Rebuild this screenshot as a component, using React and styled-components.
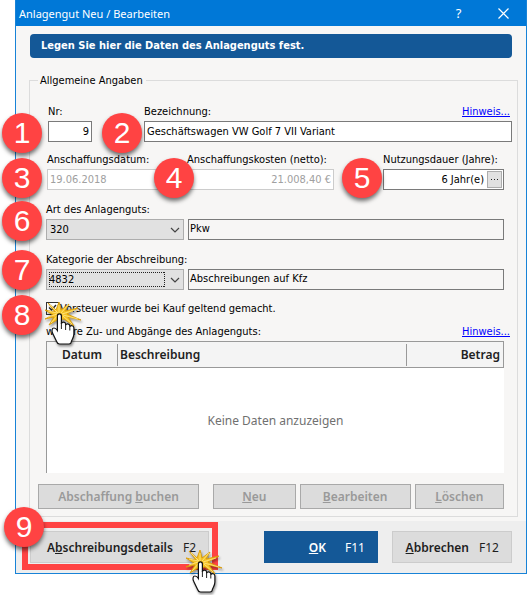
import React, { useState } from 'react';
import styled, { createGlobalStyle } from 'styled-components';

const App = () => {
  const [tax, setTax] = useState(true);

  return (
    <Page>
      <GlobalStyle />
      <Dialog>
        <TitleBar>
          <Title>Anlagengut Neu / Bearbeiten</Title>
          <TitleBtn type="button" aria-label="Hilfe">?</TitleBtn>
          <TitleBtn type="button" aria-label="Schließen">
            <svg width="11" height="11" viewBox="0 0 11 11">
              <path d="M.5.5l10 10M10.5.5l-10 10" stroke="#fff" strokeWidth="1.2" />
            </svg>
          </TitleBtn>
        </TitleBar>

        <Main>
          <Banner>Legen Sie hier die Daten des Anlagenguts fest.</Banner>
          <Group>
            <Legend>Allgemeine Angaben</Legend>
            <Fields>
              <Row $wide $left="2px">
                <Field $width="44px">
                  <Label htmlFor="nr">Nr:</Label>
                  <Input id="nr" defaultValue="9" $right />
                  <FieldBadge $left="-46px" $bottom="-11px">1</FieldBadge>
                </Field>
                <Field $gap="52px" $grow>
                  <LabelLine>
                    <Label htmlFor="name">Bezeichnung:</Label>
                    <Hint href="#name">Hinweis...</Hint>
                  </LabelLine>
                  <Input id="name" defaultValue="Geschäftswagen VW Golf 7 VII Variant" />
                  <FieldBadge $left="-42px" $bottom="-11px">2</FieldBadge>
                </Field>
              </Row>

              <Row $top="9px" $left="1px">
                <Field $width="118px">
                  <Label htmlFor="date">Anschaffungsdatum:</Label>
                  <Input id="date" defaultValue="19.06.2018" disabled />
                  <FieldBadge $left="-45px" $bottom="-8px">3</FieldBadge>
                </Field>
                <Field $gap="22px" $grow>
                  <Label htmlFor="cost">Anschaffungskosten (netto):</Label>
                  <Input id="cost" defaultValue="21.008,40 €" disabled $right />
                  <FieldBadge $left="-33px" $bottom="-8px">4</FieldBadge>
                </Field>
                <Field $gap="49px" $width="121px">
                  <Label htmlFor="years">Nutzungsdauer (Jahre):</Label>
                  <InputBox>
                    <InnerInput id="years" defaultValue="6 Jahr(e)" />
                    <MoreBtn type="button" aria-label="Auswählen">
                      <svg width="8" height="1" viewBox="0 0 8 1" fill="#222">
                        <path d="M0 0h1v1H0zM3 0h1v1H3zM6 0h1v1H6z" />
                      </svg>
                    </MoreBtn>
                  </InputBox>
                  <FieldBadge $left="-41px" $bottom="-8px">5</FieldBadge>
                </Field>
              </Row>

              <Row $top="11px">
                <Choice
                  id="kind"
                  label="Art des Anlagenguts:"
                  value="320"
                  text="Pkw"
                  badge={<FieldBadge $left="-44px" $bottom="-1px">6</FieldBadge>}
                />
              </Row>
              <Row $top="11px">
                <Choice
                  id="category"
                  label="Kategorie der Abschreibung:"
                  value="4832"
                  text="Abschreibungen auf Kfz"
                  badge={<FieldBadge $left="-44px" $bottom="0">7</FieldBadge>}
                  focused
                />
              </Row>

              <CheckRow>
                <CheckBox id="tax" type="checkbox" checked={tax} onChange={() => setTax(!tax)} />
                {tax && (
                  <CheckMark width="13" height="13" viewBox="0 0 13 13">
                    <path d="M3 6.5l2.500 2.500L10 4" fill="none" stroke="#222" strokeWidth="1.3" />
                  </CheckMark>
                )}
                <CheckLabel htmlFor="tax">Vorsteuer wurde bei Kauf geltend gemacht.</CheckLabel>
                <FieldBadge $left="-44px" $bottom="-19px">8</FieldBadge>
                <CheckPointer><Hand /></CheckPointer>
              </CheckRow>

              <LabelLine>
                <Label as="span" id="moves">weitere Zu- und Abgänge des Anlagenguts:</Label>
                <Hint href="#moves">Hinweis...</Hint>
              </LabelLine>
              <TableBox>
                <Table aria-labelledby="moves">
                  <thead>
                    <tr>
                      <Th $width="70px" $align="center">Datum</Th>
                      <Th $line>Beschreibung</Th>
                      <Th $width="98px" $align="right" $line>Betrag</Th>
                    </tr>
                  </thead>
                  <tbody>
                    <tr>
                      <Empty colSpan="3">Keine Daten anzuzeigen</Empty>
                    </tr>
                  </tbody>
                </Table>
              </TableBox>
            </Fields>

            <Actions>
              <ActionBtn type="button" disabled $size={162} $gap="14px">Abschaffung <u>b</u>uchen</ActionBtn>
              <ActionBtn type="button" disabled $size={82} $gap="4px"><u>N</u>eu</ActionBtn>
              <ActionBtn type="button" disabled $size={111} $gap="4px"><u>B</u>earbeiten</ActionBtn>
              <ActionBtn type="button" disabled $size={89}><u>L</u>öschen</ActionBtn>
            </Actions>
          </Group>
        </Main>

        <Footer>
          <Marked>
            <FooterBtn type="button" $width="179px">
              <span>A<u>b</u>schreibungsdetails</span>
              <Key>F2</Key>
            </FooterBtn>
            <Frame />
            <FooterBadge>9</FooterBadge>
            <FooterPointer><Hand /></FooterPointer>
          </Marked>
          <FooterBtn type="button" $width="114px" $primary>
            <span><u>O</u>K</span>
            <Key>F11</Key>
          </FooterBtn>
          <FooterBtn type="button" $width="120px">
            <span><u>A</u>bbrechen</span>
            <Key>F12</Key>
          </FooterBtn>
        </Footer>
      </Dialog>
    </Page>
  );
}

const Choice = ({ id, label, value, text, badge, focused }) => {
  return (
    <>
      <Field $width="138px">
        <Label htmlFor={id}>{label}</Label>
        <SelectBox>
          <Select id={id} defaultValue={value} $focused={focused}>
            <option>{value}</option>
          </Select>
          <Chevron width="10" height="6" viewBox="0 0 10 6">
            <path d="M1 1l4 4 4-4" fill="none" stroke="#444" strokeWidth="1.2" />
          </Chevron>
        </SelectBox>
        {badge}
      </Field>
      <Field $gap="4px" $grow>
        <Output htmlFor={id}>{text}</Output>
      </Field>
    </>
  );
}

// pointing hand with a click burst behind the fingertip
const Hand = () => {
  return (
    <svg width="44" height="46" viewBox="0 0 44 46">
      <path
        d="M8 2L16 9 19 1 21 9 29 3 25 10 38 7 27 13 41 19 28 16 34 25 24 18 17 19 9 24 14 16 5 18 13 14 5 9 15 11z"
        fill="#f4c224"
        stroke="#d99c08"
        strokeWidth=".9"
      />
      <path d="M10 4l8 8M19 4v8M28 4l-7 8M35 9l-13 4M38 18l-15-4M32 23l-9-8M11 22l7-8M8 16l9-3M8 10l9 2" stroke="#ffe98a" strokeWidth=".8" />
      <path
        d="M17.400 15c0-2.800 4-2.800 4 0v8c.2-2.400 4-2.400 4.200 0v1.200c.5-2 4-1.900 4.200.6v1c.6-1.800 4.100-1.400 4.100 1.200v6c0 3.500-1.600 5-2.500 7.500-.2 1.700-.9 2.500-2.400 2.500h-9.500c-1.500 0-2.400-1-2.900-2.500L13 33c-1.700-3-1.200-6 1-6 1.400 0 2.400 1 3.400 2.500z"
        fill="#fff"
        stroke="#111"
        strokeWidth="1.2"
      />
      <path d="M21.400 22v6M25.600 24v5M29.800 25.500v4" stroke="#222" strokeWidth="1" />
    </svg>
  );
}

const GlobalStyle = createGlobalStyle`
  body {
    margin: 0;
    background: #fff;
    font-family: "DejaVu Sans Condensed", "Noto Sans", sans-serif;
    font-size: 11px;
    color: #000;
  }
  * {
    box-sizing: border-box;
  }
  button, input, select {
    font-family: inherit;
    font-size: inherit;
  }
`;

const Page = styled.div`
  min-height: 100vh;
  padding-left: 15px;
`;

const Dialog = styled.div`
  background-color: #f7f6f5;
  border: 1px solid #1883d7;
  border-top: 0;
`;

const TitleBar = styled.header`
  display: flex;
  align-items: center;
  height: 26px;
  padding-left: 3px;
  background-color: #0078d7;
  color: #fff;
`;

const Title = styled.h1`
  flex: 1;
  margin: 0;
  font-family: "Noto Sans", sans-serif;
  font-size: 11px;
  font-weight: 400;
`;

const TitleBtn = styled.button`
  display: flex;
  align-items: center;
  justify-content: center;
  width: 45px;
  height: 26px;
  padding: 0;
  border: 0;
  background: none;
  color: #fff;
  font-family: "Noto Sans", sans-serif;
  font-size: 13px;
`;

const Main = styled.main`
  padding: 8px 8px 4px 13px;
`;

const Banner = styled.div`
  height: 24px;
  margin: 0 6px 15px 1px;
  padding-left: 11px;
  border-radius: 4px;
  background-color: #145897;
  color: #fff;
  font-weight: 700;
  line-height: 24px;
`;

const Group = styled.fieldset`
  min-width: 0;
  margin: 0;
  padding: 15px 5px 7px 8px;
  border: 1px solid #dcdcdc;
`;

const Legend = styled.legend`
  padding: 0 3px 0 2px;
  line-height: 15px;
`;

const Fields = styled.div`
  padding-left: 8px;
`;

const Row = styled.div`
  display: flex;
  align-items: flex-end;
  margin-top: ${(props) => props.$top || '0'};
  padding-left: ${(props) => props.$left || '0'};
  padding-right: ${(props) => (props.$wide ? '0' : '8px')};
`;

const Field = styled.div`
  position: relative;
  display: flex;
  flex-direction: column;
  flex: ${(props) => (props.$grow ? '1 1 0' : `0 0 ${props.$width}`)};
  min-width: 0;
  margin-left: ${(props) => props.$gap || '0'};
`;

const LabelLine = styled.div`
  display: flex;
  justify-content: space-between;
`;

const Label = styled.label`
  height: 18px;
  line-height: 18px;
  white-space: nowrap;
`;

const Hint = styled.a`
  margin-right: 2px;
  line-height: 18px;
  color: #0000ff;
`;

const Input = styled.input`
  width: 100%;
  height: 21px;
  padding: 0 2px;
  border: 1px solid #7a7a7a;
  border-radius: 0;
  background-color: #fff;
  color: #000;
  text-align: ${(props) => (props.$right ? 'right' : 'left')};
  outline: none;
  &:disabled {
    border-color: #ccc;
    color: #a0a0a0;
  }
`;

const InputBox = styled.div`
  display: flex;
  height: 21px;
  padding: 1px;
  border: 1px solid #7a7a7a;
  background-color: #fff;
`;

const InnerInput = styled.input`
  flex: 1;
  min-width: 0;
  padding: 0 3px;
  border: 0;
  background: none;
  text-align: right;
  outline: none;
`;

const MoreBtn = styled.button`
  display: flex;
  align-items: center;
  justify-content: center;
  width: 15px;
  padding: 0;
  border: 1px solid #adadad;
  background-color: #e1e1e1;
`;

const SelectBox = styled.div`
  position: relative;
`;

const Select = styled.select`
  display: block;
  width: 100%;
  height: 21px;
  padding: 0 20px 0 3px;
  border: 1px solid #adadad;
  border-radius: 0;
  background-color: #e1e1e1;
  color: #000;
  appearance: none;
  outline: none;
  ${(props) => props.$focused && `
    padding: 2px 18px 2px 2px;
    background-image:
      linear-gradient(90deg, #222 50%, transparent 0), linear-gradient(90deg, #222 50%, transparent 0),
      linear-gradient(#222 50%, transparent 0), linear-gradient(#222 50%, transparent 0);
    background-size: 2px 1px, 2px 1px, 1px 2px, 1px 2px;
    background-repeat: repeat-x, repeat-x, repeat-y, repeat-y;
    background-position: 0 0, 0 100%, 0 0, 100% 0;
    background-clip: content-box, content-box, content-box, border-box;
    background-origin: content-box;
    background-clip: content-box;
    box-shadow: inset 0 0 0 2px #e1e1e1, inset -18px 0 #e1e1e1;
  `}
`;

const Chevron = styled.svg`
  position: absolute;
  top: 8px;
  right: 4px;
  pointer-events: none;
`;

const Output = styled.output`
  height: 21px;
  padding-left: 1px;
  border: 1px solid #7a7a7a;
  line-height: 17px;
`;

const CheckRow = styled.div`
  position: relative;
  display: flex;
  align-items: center;
  height: 16px;
  margin: 10px 0 7px;
`;

const CheckBox = styled.input`
  width: 13px;
  height: 13px;
  margin: 0;
  border: 1px solid #333;
  background-color: #fff;
  appearance: none;
`;

const CheckMark = styled.svg`
  position: absolute;
  top: 1px;
  left: 0;
  pointer-events: none;
`;

const CheckLabel = styled.label`
  padding-left: 1px;
`;

const TableBox = styled.div`
  height: 132px;
  margin-right: 8px;
  background-color: #fff;
`;

const Table = styled.table`
  width: 100%;
  height: 100%;
  border-collapse: separate;
  border-spacing: 0;
  border-left: 1px solid #999;
  font-family: "Noto Sans", sans-serif;
  font-size: 12px;
  table-layout: fixed;
`;

const Th = styled.th`
  width: ${(props) => props.$width || 'auto'};
  height: 27px;
  padding: 0 3px;
  border-top: 1px solid #999;
  border-bottom: 1px solid #999;
  background: ${(props) => (props.$line ? 'linear-gradient(#999, #999) 0 2px / 1px 22px no-repeat, #f4f4f4' : '#f4f4f4')};
  color: #222;
  font-weight: 600;
  text-align: ${(props) => props.$align || 'left'};
  &:last-child {
    border-right: 1px solid #999;
  }
`;

const Empty = styled.td`
  padding: 0;
  color: #707070;
  text-align: center;
`;

const Actions = styled.div`
  display: flex;
  margin-top: 11px;
  padding-right: 8px;
`;

const ActionBtn = styled.button`
  flex: ${(props) => props.$size} 1 0;
  height: 25px;
  margin-right: ${(props) => props.$gap || '0'};
  padding: 0;
  border: 1px solid #a9a9a9;
  background-color: #dcdcdc;
  font-family: "Noto Sans", sans-serif;
  font-size: 12px;
  font-weight: 600;
  white-space: nowrap;
  &:disabled {
    color: #999;
  }
`;

const Footer = styled.footer`
  display: flex;
  align-items: center;
  gap: 14px;
  padding: 10px 14px;
  background-color: #eee;
`;

const Marked = styled.div`
  position: relative;
  margin-right: auto;
`;

const FooterBtn = styled.button`
  display: flex;
  align-items: center;
  justify-content: flex-end;
  gap: ${(props) => (props.$primary ? '19px' : '10px')};
  width: ${(props) => props.$width};
  height: 32px;
  padding: 0 12px;
  border: 1px solid ${(props) => (props.$primary ? '#145897' : '#ccc')};
  background-color: ${(props) => (props.$primary ? '#145897' : '#dcdcdc')};
  color: ${(props) => (props.$primary ? '#fff' : '#1e1e1e')};
  font-family: "Noto Sans", sans-serif;
  font-size: 12px;
  font-weight: 600;
  white-space: nowrap;
`;

const Key = styled.span`
  font-weight: 400;
`;

const Badge = styled.span`
  position: absolute;
  z-index: 1;
  width: 40px;
  height: 40px;
  border-radius: 50%;
  background-color: #ff4343;
  box-shadow: 0 3px 4px rgba(0, 0, 0, 0.55);
  color: #fff;
  font-family: "Liberation Sans", Arial, sans-serif;
  font-size: 30px;
  line-height: 40px;
  text-align: center;
`;

const FieldBadge = styled(Badge)`
  bottom: ${(props) => props.$bottom};
  left: ${(props) => props.$left};
`;

const Frame = styled.span`
  position: absolute;
  inset: -9px -9px -7px -8px;
  border: 6px solid #ff4343;
  pointer-events: none;
`;

const FooterBadge = styled(Badge)`
  top: -24px;
  left: -26px;
`;

const Pointer = styled.span`
  position: absolute;
  z-index: 2;
  display: flex;
  filter: drop-shadow(1px 2px 1px rgba(0, 0, 0, 0.4));
  pointer-events: none;
`;

const CheckPointer = styled(Pointer)`
  top: 1px;
  left: -6px;
`;

const FooterPointer = styled(Pointer)`
  top: 18px;
  right: -16px;
`;

export default App;
